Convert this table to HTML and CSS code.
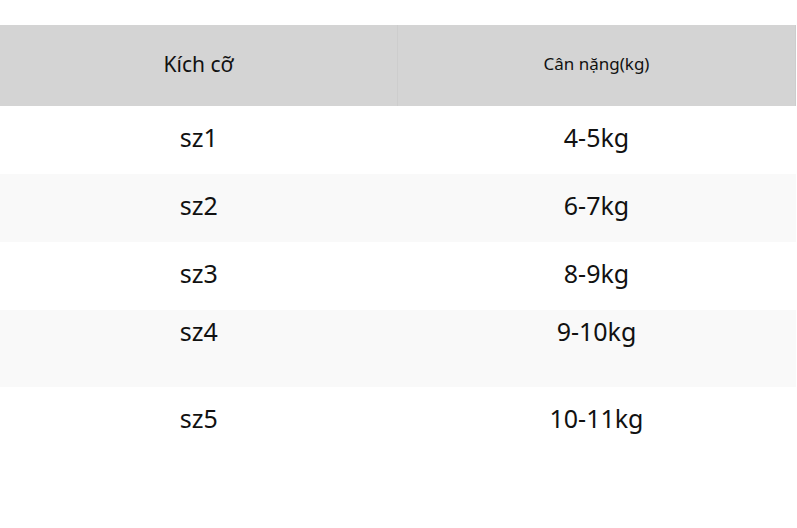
FILE: index.html
```html
<!DOCTYPE html>
<html lang="vi">
<head>
<meta charset="utf-8">
<title>Bảng kích cỡ</title>
<link rel="stylesheet" href="styles.css">
</head>
<body>
<table class="size-table">
  <thead>
    <tr>
      <th class="head head-size">Kích cỡ</th>
      <th class="head head-weight">Cân nặng(kg)</th>
    </tr>
  </thead>
  <tbody>
    <tr class="row"><td>sz1</td><td>4-5kg</td></tr>
    <tr class="row alt"><td>sz2</td><td>6-7kg</td></tr>
    <tr class="row"><td>sz3</td><td>8-9kg</td></tr>
    <tr class="row alt tall"><td>sz4</td><td>9-10kg</td></tr>
    <tr class="row"><td>sz5</td><td>10-11kg</td></tr>
  </tbody>
</table>
</body>
</html>
```
FILE: styles.css
```css
html, body {
  margin: 0;
  padding: 0;
  background: #ffffff;
}
body {
  padding-top: 25px;
  font-family: "Noto Sans", "Open Sans", sans-serif;
  color: #111111;
}
.size-table {
  width: 796px;
  border-collapse: collapse;
  table-layout: fixed;
}
.head {
  height: 77px;
  padding: 0 0 4px;
  background: #d4d4d4;
  font-weight: 400;
  text-align: center;
  vertical-align: middle;
  color: #111111;
}
.head-size {
  width: 397px;
  font-size: 21px;
  border-right: 1px solid #cdcdcd;
}
.head-weight {
  font-size: 17px;
  border-right: 1px solid #cdcdcd;
}
.row td {
  padding: 17px 0 23px;
  line-height: 28px;
  font-size: 25px;
  text-align: center;
  vertical-align: top;
}
.row.alt td {
  background: #f9f9f9;
}
.row.tall td {
  padding: 7px 0 42px;
}
```
